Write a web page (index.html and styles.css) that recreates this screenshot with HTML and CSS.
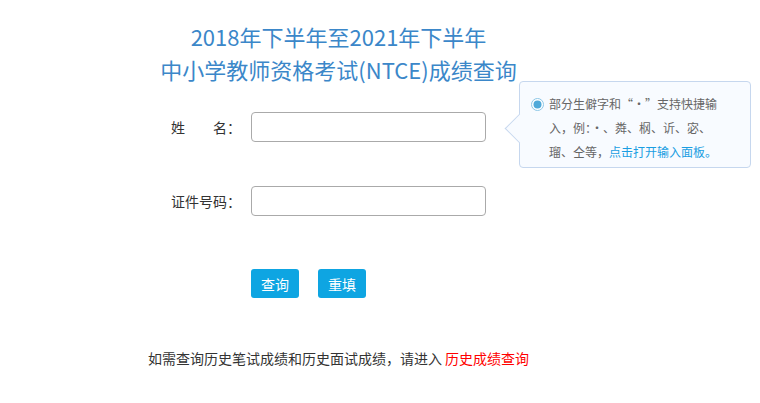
FILE: index.html
```html
<!DOCTYPE html>
<html lang="zh-CN">
<head>
  <meta charset="UTF-8" />
  <title>成绩查询</title>
  <link rel="stylesheet" href="styles.css">
</head>
<body>
  <div class="page">
    <h1 class="title">2018年下半年至2021年下半年<br>中小学教师资格考试(NTCE)成绩查询</h1>

    <div class="form">
      <div class="row">
        <label class="label" for="name">姓&emsp;&emsp;名：</label>
        <input class="field" id="name" type="text">

        <div class="tip">
          <svg class="radio" width="13" height="13" viewBox="0 0 13 13">
            <circle cx="6.5" cy="6.5" r="6" fill="#fff" stroke="#8cc6e6" stroke-width="1"/>
            <circle cx="6.5" cy="6.5" r="4" fill="#4fa9d9"/>
          </svg>
          <p class="tip-text">部分生僻字和“·”支持快捷输入，例：·、粦、㭎、䜣、宓、瑠、仝等，<a href="#">点击打开输入面板。</a></p>
        </div>
      </div>

      <div class="row row-id">
        <label class="label" for="idno">证件号码：</label>
        <input class="field" id="idno" type="text">
      </div>

      <div class="actions">
        <button class="btn" type="button">查询</button>
        <button class="btn" type="button">重填</button>
      </div>
    </div>

    <p class="note">如需查询历史笔试成绩和历史面试成绩，请进入 <a href="#">历史成绩查询</a></p>
  </div>
</body>
</html>
```

FILE: styles.css
```css
* {
  box-sizing: border-box;
}

body {
  margin: 0;
  font-family: "Microsoft YaHei", "Noto Sans CJK SC", sans-serif;
  color: #333;
  background: #fff;
}

.page {
  width: 760px;
}

.title {
  width: 677px;
  margin: 0;
  padding-top: 20px;
  font-size: 22px;
  font-weight: normal;
  line-height: 33px;
  text-align: center;
  color: #3b87c9;
}

.form {
  padding-left: 171px;
  margin-top: 26px;
}

.row {
  position: relative;
  display: flex;
  align-items: center;
  height: 30px;
}

.row-id {
  margin-top: 44px;
}

.label {
  width: 80px;
  font-size: 14px;
  color: #333;
}

.field {
  width: 235px;
  height: 30px;
  margin: 0;
  border: 1px solid #aaa;
  border-radius: 4px;
  background: #fff;
}

/* tooltip beside the name field */
.tip {
  position: absolute;
  left: 348px;
  top: -31px;
  width: 232px;
  height: 87px;
  display: flex;
  align-items: flex-start;
  gap: 5px;
  padding: 10px 8px 0 11px;
  background: #f8fbff;
  border: 1px solid #c6d7ee;
  border-radius: 4px;
}

.tip::before {
  content: "";
  position: absolute;
  left: -11px;
  top: 36px;
  width: 20px;
  height: 20px;
  background: #f8fbff;
  border-left: 1px solid #c6d7ee;
  border-bottom: 1px solid #c6d7ee;
  transform: rotate(45deg);
}

.radio {
  flex: none;
  margin-top: 6px;
}

.tip-text {
  width: 170px;
  margin: 0;
  font-size: 12px;
  line-height: 24px;
  color: #666;
}

.tip-text a {
  color: #1a9ee2;
  text-decoration: none;
}

.actions {
  display: flex;
  gap: 19px;
  margin-top: 53px;
  padding-left: 80px;
}

.btn {
  width: 48px;
  height: 29px;
  padding: 0;
  border: 0;
  border-radius: 3px;
  background: #0ea5e2;
  color: #fff;
  font-family: inherit;
  font-size: 14px;
}

.note {
  width: 677px;
  margin: 50px 0 0;
  font-size: 14px;
  line-height: 20px;
  text-align: center;
  color: #333;
}

.note a {
  color: #f00;
  text-decoration: none;
}
```
